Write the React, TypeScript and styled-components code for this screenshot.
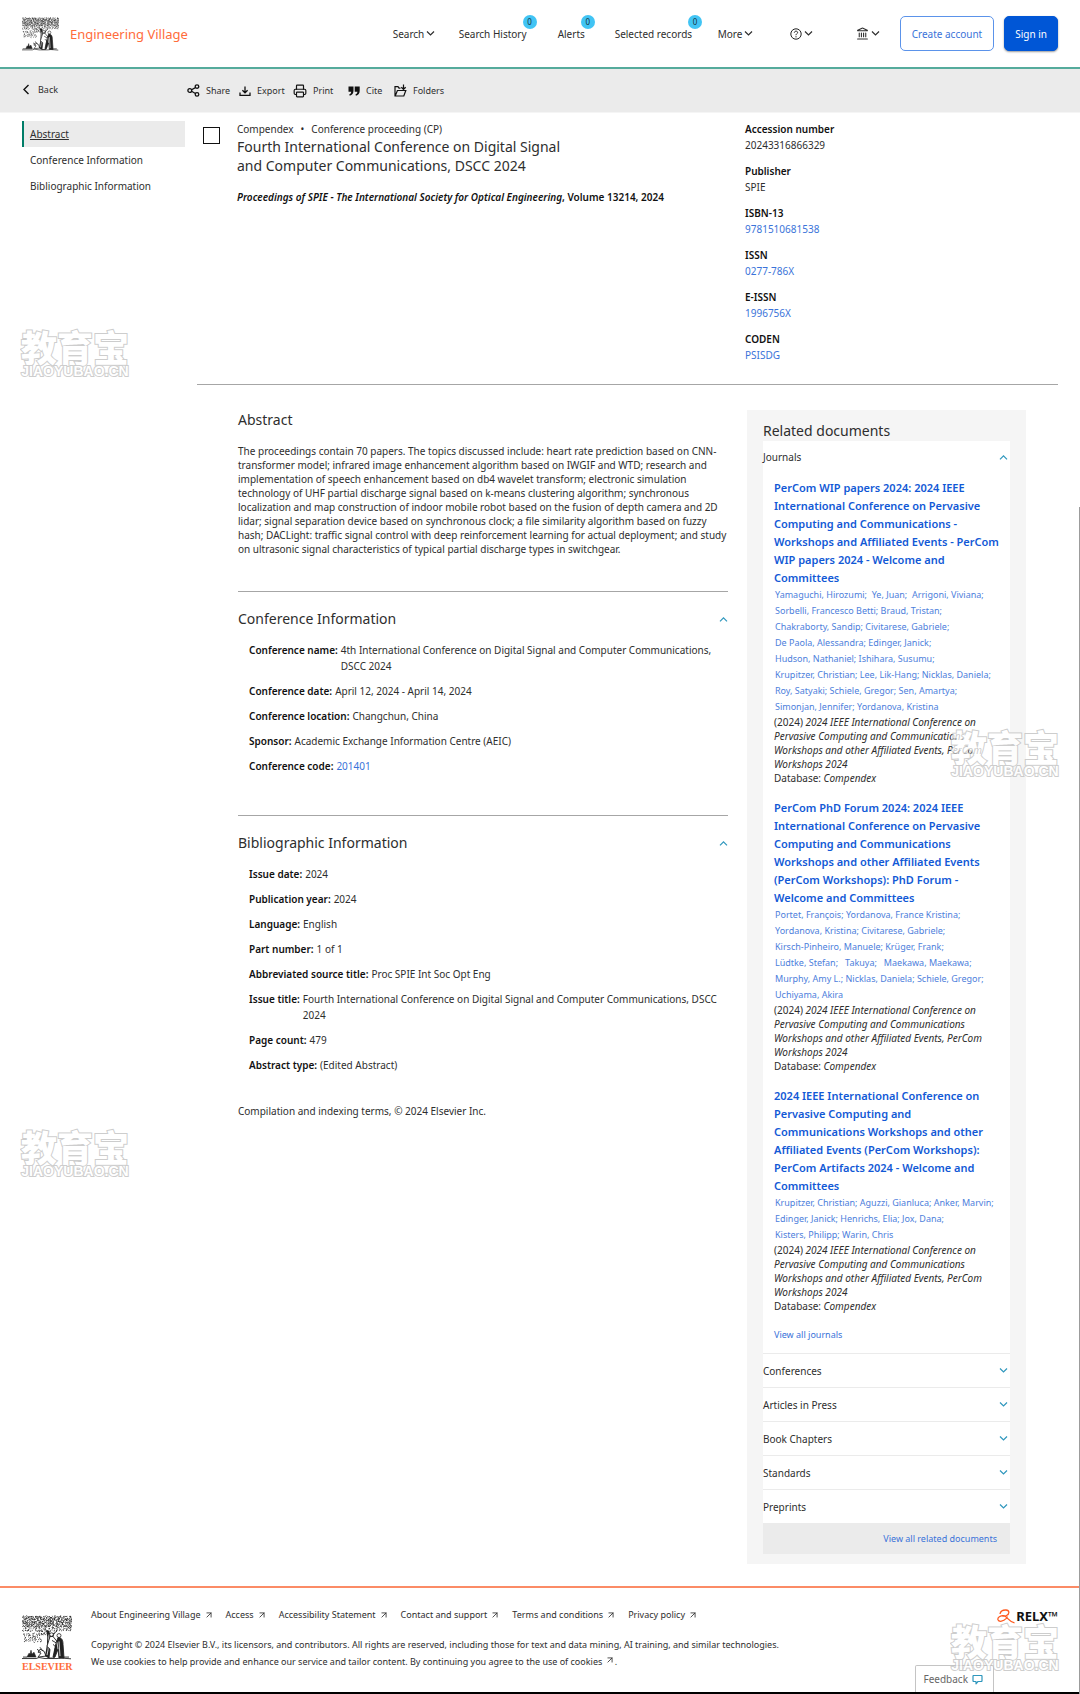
import React from "react";
import styled, { createGlobalStyle, css } from "styled-components";
import { ArrowUpRight, Landmark, Printer } from "lucide-react";

const color = {
  text: "#2e2e2e",
  strong: "#111111",
  link: "#3a73d9",
  blue: "#0056d6",
  titleLink: "#1259d6",
  orange: "#ff6c3b",
  green: "#007d68",
  teal: "#2f97bd",
  grey: "#ebebeb",
  pale: "#f5f5f5",
  rule: "#a6a6a6",
};

const GlobalStyle = createGlobalStyle`
  * { box-sizing: border-box; }
  body {
    margin: 0;
    background: #fff;
    color: ${color.text};
    font: 11px/16px "Noto Sans", "Noto Sans CJK SC", sans-serif;
  }
  h1, h2, h3, p, ul, dl, dd { margin: 0; padding: 0; font-weight: 400; }
  ul { list-style: none; }
  a { color: inherit; text-decoration: none; }
  button { font: inherit; color: inherit; background: none; border: 0; padding: 0; cursor: pointer; }
`;

const Page = styled.div`
  position: relative;
  overflow: hidden;
`;

/* ---------- header ---------- */

const Header = styled.header`
  display: flex;
  align-items: center;
  justify-content: space-between;
  height: 69px;
  padding: 0 22px;
  border-bottom: 2px solid #55ab9c;
`;

const Brand = styled.a`
  display: flex;
  align-items: center;
  gap: 11px;
  color: ${color.orange};
  font-size: 13px;
`;

const Nav = styled.nav`
  display: grid;
  grid-template-columns: 66px 99px 57px 103px 72px 66px 44px auto auto;
  align-items: center;
`;

const NavButton = styled.button`
  position: relative;
  display: inline-flex;
  align-items: center;
  justify-self: start;
  gap: 2px;
  white-space: nowrap;
  font-size: 10px;
`;

const Badge = styled.span`
  position: absolute;
  right: -10px;
  top: -11px;
  width: 14px;
  height: 14px;
  border-radius: 50%;
  background: #41c4f4;
  color: #1c3440;
  font-size: 8px;
  line-height: 14px;
  text-align: center;
`;

const AccountButton = styled.button<{ $primary?: boolean }>`
  height: 35px;
  padding: 0 11px;
  border: 1px solid #5b93ea;
  border-radius: 5px;
  color: ${color.link};
  font-size: 10px;
  white-space: nowrap;
  ${(p) =>
    p.$primary &&
    css`
      margin-left: 10px;
      padding: 0 10px;
      border-color: ${color.blue};
      background: ${color.blue};
      color: #fff;
      box-shadow: 0 1px 2px rgba(0, 0, 0, 0.4);
    `}
`;

/* ---------- toolbar ---------- */

const Toolbar = styled.div`
  display: flex;
  align-items: center;
  height: 44px;
  padding: 0 22px;
  background: ${color.grey};
  border-bottom: 1px solid ${color.pale};
`;

const BackSlot = styled.div`
  flex: 0 0 165px;
`;

const ToolList = styled.div`
  display: grid;
  grid-template-columns: 52px 54px 55px 46px auto;
`;

const Tool = styled.button<{ $gap?: number }>`
  display: inline-flex;
  align-items: center;
  gap: ${(p) => p.$gap ?? 6}px;
  font-size: 9px;
`;

/* ---------- body ---------- */

const Body = styled.div`
  display: flex;
  align-items: flex-start;
  gap: 12px;
  padding: 8px 22px 0;
`;

const Sidebar = styled.nav`
  flex: 0 0 163px;
`;

const SideLink = styled.a<{ $active?: boolean }>`
  display: block;
  padding-left: 6px;
  border-left: 2px solid transparent;
  font-size: 10px;
  line-height: 26px;
  ${(p) =>
    p.$active &&
    css`
      background: ${color.grey};
      border-color: ${color.green};
      text-decoration: underline;
    `}
`;

const Main = styled.main`
  flex: 1;
  min-width: 0;
`;

const RecordHead = styled.section`
  display: grid;
  grid-template-columns: 16px minmax(0, 1fr) 313px;
  column-gap: 18px;
  padding: 0 0 21px 6px;
  border-bottom: 1px solid ${color.rule};
`;

const Check = styled.input`
  appearance: none;
  width: 17px;
  height: 17px;
  margin: 6px 0 0;
  border: 1px solid #111;
  background: #fff;
`;

const Kind = styled.p`
  display: flex;
  gap: 7px;
  font-size: 10px;
`;

const Title = styled.h1`
  font-size: 14px;
  line-height: 19px;
`;

const Source = styled.p`
  margin-top: 14px;
  font-size: 10px;
  font-weight: 600;
  color: ${color.strong};
`;

const Meta = styled.dl`
  display: grid;
  gap: 10px;
  font-size: 10px;
`;

const MetaLabel = styled.dt`
  font-weight: 600;
  color: ${color.strong};
`;

const Link = styled.a`
  color: ${color.link};
`;

const Columns = styled.div`
  display: flex;
  align-items: flex-start;
  gap: 19px;
  padding: 25px 32px 0 41px;
`;

const Article = styled.div`
  flex: 1;
  min-width: 0;
`;

const Section = styled.section<{ $space: number }>`
  padding-bottom: ${(p) => p.$space}px;
  border-bottom: 1px solid ${color.rule};
`;

const SectionHead = styled.div<{ $first?: boolean }>`
  display: flex;
  align-items: center;
  justify-content: space-between;
  padding: ${(p) => (p.$first ? "0 0 14px" : "17px 0 13px")};
  color: ${color.teal};
`;

const SectionTitle = styled.h2`
  color: ${color.text};
  font-size: 14px;
  line-height: 20px;
`;

const Paragraph = styled.p`
  font-size: 10px;
  line-height: 14px;
`;

const Details = styled.dl`
  display: grid;
  gap: 9px;
  padding-left: 11px;
  font-size: 10px;
`;

const Detail = styled.div`
  display: flex;
  gap: 3px;
`;

const DetailLabel = styled.dt`
  flex: none;
  font-weight: 600;
  color: ${color.strong};
`;

const Terms = styled.p`
  margin-top: 30px;
  font-size: 10px;
`;

/* ---------- related documents ---------- */

const Related = styled.aside`
  flex: 0 0 279px;
  padding: 11px 16px 10px;
  background: ${color.pale};
`;

const Card = styled.div`
  background: #fff;
`;

const AccordionButton = styled.button<{ $closed?: boolean }>`
  display: flex;
  align-items: center;
  justify-content: space-between;
  width: 100%;
  height: ${(p) => (p.$closed ? 34 : 32)}px;
  padding-right: 2px;
  border-top: ${(p) => (p.$closed ? `1px solid ${color.grey}` : "0")};
  font-size: 10px;
  color: ${color.text};
  svg { color: ${color.teal}; }
`;

const Documents = styled.div`
  display: grid;
  gap: 14px;
  padding: 6px 0 10px 11px;
  white-space: nowrap;
`;

const DocTitle = styled.h3`
  color: ${color.titleLink};
  font-size: 11px;
  font-weight: 600;
  line-height: 18px;
`;

const Authors = styled.p`
  padding-left: 1px;
  color: #4d80dc;
  font-size: 9px;
  line-height: 16px;
  white-space: pre;
`;

const AllJournals = styled(Link)`
  font-size: 9px;
`;

const RelatedFoot = styled.div`
  display: flex;
  align-items: center;
  justify-content: flex-end;
  height: 31px;
  padding-right: 13px;
  background: ${color.grey};
  font-size: 9px;
`;

/* ---------- footer ---------- */

const Footer = styled.footer`
  position: relative;
  display: flex;
  height: 106px;
  margin-top: 22px;
  padding: 0 22px;
  border-top: 2px solid #fb8b66;
`;

const ElsevierMark = styled.div`
  display: flex;
  flex-direction: column;
  padding-top: 27px;
  width: 69px;
  color: ${color.orange};
  font: 700 10px/14px "Liberation Serif", serif;
`;

const FooterText = styled.div`
  flex: 1;
  padding-top: 19px;
  font-size: 9px;
`;

const FooterLinks = styled.ul`
  display: flex;
  gap: 12px;
  margin-bottom: 13px;
`;

const FooterLink = styled.a`
  display: flex;
  align-items: center;
  gap: 3px;
  white-space: nowrap;
`;

const Legal = styled.p`
  line-height: 17px;
`;

const Relx = styled.div`
  display: flex;
  align-items: center;
  gap: 1px;
  height: 16px;
  margin-top: 20px;
  color: #111;
  font: 700 13px/16px "Noto Sans", sans-serif;
`;

const Feedback = styled.button`
  position: absolute;
  right: 86px;
  bottom: 0;
  display: flex;
  align-items: center;
  gap: 4px;
  height: 27px;
  padding: 0 10px 0 7px;
  border: 1px solid #c4c4c4;
  border-bottom: 0;
  border-radius: 2px 2px 0 0;
  background: #fff;
  color: #666;
  font-size: 10px;
`;

const BottomBar = styled.div`
  height: 2px;
  background: #000;
`;

const EdgeLine = styled.div`
  position: absolute;
  right: 0;
  top: 507px;
  bottom: 0;
  width: 1px;
  background: #9c9c9c;
`;

const Stamp = styled.div<{ $right?: boolean; $top: number }>`
  position: absolute;
  top: ${(p) => p.$top}px;
  ${(p) => (p.$right ? "right: 21px;" : "left: 21px;")}
  width: 108px;
  color: #fff;
  opacity: 0.75;
  text-align: center;
  white-space: nowrap;
  pointer-events: none;
  paint-order: stroke fill;
  -webkit-text-stroke: 2px #bdbdbd;
  font: 900 36px/35px "Noto Sans CJK SC", sans-serif;
`;

const StampSite = styled.div`
  font: 700 14px/14px "Liberation Sans", sans-serif;
`;

/* ---------- drawings ---------- */

const ChevronIcon = ({ up = false }: { up?: boolean }) => (
  <svg width="9" height="9" viewBox="0 0 9 9" fill="none" stroke="currentColor" strokeWidth="1.2" aria-hidden="true">
    <path d={up ? "M1 6.300L4.500 2.800 8 6.300" : "M1 2.500L4.500 6 8 2.500"} />
  </svg>
);

const BackIcon = () => (
  <svg width="9" height="11" viewBox="0 0 9 11" fill="none" stroke="#111" strokeWidth="1.4" aria-hidden="true">
    <path d="M6.500 1L2 5.500 6.500 10" />
  </svg>
);

function buildFoliage() {
  let seed = 11;
  const rnd = () => {
    seed = (seed * 16807) % 2147483647;
    return seed / 2147483647;
  };
  let d = "";
  const fill = (x0: number, x1: number, y0: number, y1: number) => {
    for (let y = y0; y < y1; y += 1.8) {
      for (let x = x0; x < x1; x += 1.9) {
        const px = x + rnd() * 1.2;
        const py = y + rnd() * 1.1;
        d += `M${px.toFixed(1)} ${py.toFixed(1)}q${(rnd() * 2 - 1).toFixed(1)} ${(rnd() * 2 - 1).toFixed(1)} ${(rnd() * 3 - 1.5).toFixed(1)} ${(rnd() * 2.4 - 1.2).toFixed(1)}`;
      }
    }
  };
  fill(1, 49, 1, 17);
  fill(1, 49, 2, 12);
  fill(2, 19, 19, 28);
  fill(17, 28, 16, 20);
  return d;
}
const foliage = buildFoliage();

const TreeLogo = ({ width, height }: { width: number; height: number }) => (
  <svg width={width} height={height} viewBox="0 0 50 46" preserveAspectRatio="none" aria-hidden="true">
    <path d={foliage} stroke="#222" strokeWidth=".95" fill="none" />
    <path d="M24 16c2 5 1 9 1 14l-2 12 3 2h6l-3-4 1-12 2-8 3-4-4 3-2 3-2-6z" fill="#222" />
    <path d="M27 20c-1 7 0 14-2 21" stroke="#fff" strokeWidth=".8" fill="none" />
    <circle cx="29.5" cy="20" r="1.8" fill="#fff" stroke="#222" strokeWidth=".8" />
    <circle cx="37" cy="21" r="2" fill="#fff" stroke="#222" strokeWidth=".8" />
    <path d="M28 22l-3 10 3 3-1 9h5l1-9 2-8-4-5z" fill="#fff" stroke="#222" strokeWidth=".9" />
    <path d="M36 23c4 0 5 3 5 7l1 14h-5l-1-9-3 8h-2l3-14zM30 26l5 3M31 30l4 4" fill="#222" stroke="#222" strokeWidth=".9" />
    <path d="M37 27l1 15M35 28l1 7" stroke="#fff" strokeWidth=".8" />
    <path d="M16 43l3-4-3-1 2-3 4 2 2 5zM15 35l4 3M18 33l3 4" stroke="#222" strokeWidth=".9" fill="none" />
    <path d="M5 43l2-4 1 1 1-4 1 4 2-2 2 5z" fill="#222" stroke="#222" strokeWidth=".6" />
    <path d="M0 44.5h14l3-1 6 1h12l4-.5 10 .8M42 43h5M1 43h4" stroke="#222" strokeWidth=".9" fill="none" />
  </svg>
);

const ShareIcon = () => (
  <svg width="13" height="13" viewBox="0 0 13 13" fill="none" stroke="#111" strokeWidth="1.3">
    <circle cx="2.8" cy="6.5" r="1.9" />
    <circle cx="10" cy="2.6" r="1.8" />
    <circle cx="10" cy="10.4" r="1.8" />
    <path d="M4.6 5.7l3.8-2.1M4.6 7.3l3.8 2.2" />
  </svg>
);

const ExportIcon = () => (
  <svg width="12" height="12" viewBox="0 0 12 12" fill="none" stroke="#111" strokeWidth="1.3">
    <path d="M1 7.5v2.8h10V7.5M6 1.5v6M3.4 5.2L6 7.8l2.6-2.6" />
  </svg>
);

const CiteIcon = () => (
  <svg width="12" height="12" viewBox="0 0 12 12" fill="#111">
    <path d="M.5 1.5h5v4.2c0 2.7-1.300 4.300-3.700 5l-.6-1.100c1.300-.6 1.900-1.400 2-2.800H.5zM6.700 1.500h5v4.200c0 2.700-1.300 4.300-3.700 5l-.6-1.100c1.300-.6 1.900-1.400 2-2.800H6.700z" />
  </svg>
);

const FolderIcon = () => (
  <svg width="13" height="13" viewBox="0 0 13 13" fill="none" stroke="#111" strokeWidth="1.2">
    <path d="M1 12V2.600h3l1 1.500h1.500M1.200 12h8.600l2-5.500H3.400zM9.500.5v4.800M7.300 3.200l2.200 2.100 2.200-2.100" />
  </svg>
);

const HelpIcon = () => (
  <svg width="12" height="12" viewBox="0 0 12 12" fill="none" stroke="#222" strokeWidth="1">
    <circle cx="6" cy="6" r="5.200" />
    <path d="M4.300 4.700C4.400 2.600 7.700 2.700 7.600 4.600 7.500 5.800 6 5.800 6 7.200M6 8.200v1.200" />
  </svg>
);

const RelxIcon = () => (
  <svg width="18" height="15" viewBox="0 0 18 15" fill="none" stroke="#ff5a1f" strokeWidth="1.300">
    <path d="M3 5C3.500 2 6.500.900 9 1c3.600.200 3.800 4 .500 5.500-1.500.700-3.500.700-4.500.200M8 6.800C3 6.300.300 8.600 1 10.800c1 2.600 5.500 1.600 8-1.200l1.600-2M7.500 6.800c3 1.500 4.500 6 10 7" />
  </svg>
);

const CommentIcon = () => (
  <svg width="11" height="11" viewBox="0 0 11 11" fill="none" stroke={color.teal} strokeWidth="1.200" strokeLinejoin="round">
    <path d="M1.500 1.500h8l.5.500v5l-.5.500H6L4 9.800V7.500H1.500L1 7V2z" />
  </svg>
);

/* ---------- data ---------- */

const sourceLines = ["2024 IEEE International Conference on", "Pervasive Computing and Communications", "Workshops and other Affiliated Events, PerCom", "Workshops 2024"];

const documents = [
  {
    title: ["PerCom WIP papers 2024: 2024 IEEE", "International Conference on Pervasive", "Computing and Communications -", "Workshops and Affiliated Events - PerCom", "WIP papers 2024 - Welcome and", "Committees"],
    authors: ["Yamaguchi, Hirozumi;  Ye, Juan;  Arrigoni, Viviana;", "Sorbelli, Francesco Betti; Braud, Tristan;", "Chakraborty, Sandip; Civitarese, Gabriele;", "De Paola, Alessandra; Edinger, Janick;", "Hudson, Nathaniel; Ishihara, Susumu;", "Krupitzer, Christian; Lee, Lik-Hang; Nicklas, Daniela;", "Roy, Satyaki; Schiele, Gregor; Sen, Amartya;", "Simonjan, Jennifer; Yordanova, Kristina"],
  },
  {
    title: ["PerCom PhD Forum 2024: 2024 IEEE", "International Conference on Pervasive", "Computing and Communications", "Workshops and other Affiliated Events", "(PerCom Workshops): PhD Forum -", "Welcome and Committees"],
    authors: ["Portet, François; Yordanova, France Kristina;", "Yordanova, Kristina; Civitarese, Gabriele;", "Kirsch-Pinheiro, Manuele; Krüger, Frank;", "Lüdtke, Stefan;   Takuya;   Maekawa, Maekawa;", "Murphy, Amy L.; Nicklas, Daniela; Schiele, Gregor;", "Uchiyama, Akira"],
  },
  {
    title: ["2024 IEEE International Conference on", "Pervasive Computing and", "Communications Workshops and other", "Affiliated Events (PerCom Workshops):", "PerCom Artifacts 2024 - Welcome and", "Committees"],
    authors: ["Krupitzer, Christian; Aguzzi, Gianluca; Anker, Marvin;", "Edinger, Janick; Henrichs, Elia; Jox, Dana;", "Kisters, Philipp; Warin, Chris"],
  },
];

const meta: [string, string, boolean][] = [
  ["Accession number", "20243316866329", false],
  ["Publisher", "SPIE", false],
  ["ISBN-13", "9781510681538", true],
  ["ISSN", "0277-786X", true],
  ["E-ISSN", "1996756X", true],
  ["CODEN", "PSISDG", true],
];

const conference: [string, React.ReactNode][] = [
  ["Conference name:", <>4th International Conference on Digital Signal and Computer Communications,<br />DSCC 2024</>],
  ["Conference date:", "April 12, 2024 - April 14, 2024"],
  ["Conference location:", "Changchun, China"],
  ["Sponsor:", "Academic Exchange Information Centre (AEIC)"],
  ["Conference code:", <Link href="#code">201401</Link>],
];

const bibliographic: [string, React.ReactNode][] = [
  ["Issue date:", "2024"],
  ["Publication year:", "2024"],
  ["Language:", "English"],
  ["Part number:", "1 of 1"],
  ["Abbreviated source title:", "Proc SPIE Int Soc Opt Eng"],
  ["Issue title:", <>Fourth International Conference on Digital Signal and Computer Communications, DSCC<br />2024</>],
  ["Page count:", "479"],
  ["Abstract type:", "(Edited Abstract)"],
];

const abstractLines = [
  "The proceedings contain 70 papers. The topics discussed include: heart rate prediction based on CNN-",
  "transformer model; infrared image enhancement algorithm based on IWGIF and WTD; research and",
  "implementation of speech enhancement based on db4 wavelet transform; electronic simulation",
  "technology of UHF partial discharge signal based on k-means clustering algorithm; synchronous",
  "localization and map construction of indoor mobile robot based on the fusion of depth camera and 2D",
  "lidar; signal separation device based on synchronous clock; a file similarity algorithm based on fuzzy",
  "hash; DACLight: traffic signal control with deep reinforcement learning for actual deployment; and study",
  "on ultrasonic signal characteristics of typical partial discharge types in switchgear.",
];

const footerLinks = ["About Engineering Village", "Access", "Accessibility Statement", "Contact and support", "Terms and conditions", "Privacy policy"];

const Lines = ({ items }: { items: string[] }) => (
  <>
    {items.map((line, i) => (
      <React.Fragment key={line}>
        {i > 0 && <br />}
        {line}
      </React.Fragment>
    ))}
  </>
);

const DetailList = ({ rows }: { rows: [string, React.ReactNode][] }) => (
  <Details>
    {rows.map(([label, value]) => (
      <Detail key={label}>
        <DetailLabel>{label}</DetailLabel>
        <dd>{value}</dd>
      </Detail>
    ))}
  </Details>
);

export default function App() {
  return (
    <Page>
      <GlobalStyle />
      <Header>
        <Brand href="#home">
          <TreeLogo width={37} height={34} />
          Engineering Village
        </Brand>
        <Nav>
          <NavButton>Search<ChevronIcon /></NavButton>
          <NavButton>Search History<Badge>0</Badge></NavButton>
          <NavButton>Alerts<Badge>0</Badge></NavButton>
          <NavButton>Selected records<Badge>0</Badge></NavButton>
          <NavButton>More<ChevronIcon /></NavButton>
          <NavButton aria-label="Help"><HelpIcon /><ChevronIcon /></NavButton>
          <NavButton aria-label="Institution"><Landmark size={13} /><ChevronIcon /></NavButton>
          <AccountButton>Create account</AccountButton>
          <AccountButton $primary>Sign in</AccountButton>
        </Nav>
      </Header>

      <Toolbar>
        <BackSlot>
          <Tool $gap={7}><BackIcon />Back</Tool>
        </BackSlot>
        <ToolList>
          <Tool><ShareIcon />Share</Tool>
          <Tool><ExportIcon />Export</Tool>
          <Tool><Printer size={14} color="#111" />Print</Tool>
          <Tool><CiteIcon />Cite</Tool>
          <Tool><FolderIcon />Folders</Tool>
        </ToolList>
      </Toolbar>

      <Body>
        <Sidebar>
          <SideLink href="#abstract" $active>Abstract</SideLink>
          <SideLink href="#conference">Conference Information</SideLink>
          <SideLink href="#bibliographic">Bibliographic Information</SideLink>
        </Sidebar>
        <Main>
          <RecordHead>
            <Check type="checkbox" aria-label="Select record" />
            <div>
              <Kind><span>Compendex</span><span>•</span><span>Conference proceeding (CP)</span></Kind>
              <Title>Fourth International Conference on Digital Signal<br />and Computer Communications, DSCC 2024</Title>
              <Source><em>Proceedings of SPIE - The International Society for Optical Engineering</em>, Volume 13214, 2024</Source>
            </div>
            <Meta>
              {meta.map(([label, value, linked]) => (
                <div key={label}>
                  <MetaLabel>{label}</MetaLabel>
                  <dd>{linked ? <Link href="#lookup">{value}</Link> : value}</dd>
                </div>
              ))}
            </Meta>
          </RecordHead>

          <Columns>
            <Article>
              <Section id="abstract" $space={35}>
                <SectionHead $first><SectionTitle>Abstract</SectionTitle></SectionHead>
                <Paragraph><Lines items={abstractLines} /></Paragraph>
              </Section>
              <Section id="conference" $space={41}>
                <SectionHead><SectionTitle>Conference Information</SectionTitle><ChevronIcon up /></SectionHead>
                <DetailList rows={conference} />
              </Section>
              <section id="bibliographic">
                <SectionHead><SectionTitle>Bibliographic Information</SectionTitle><ChevronIcon up /></SectionHead>
                <DetailList rows={bibliographic} />
              </section>
              <Terms>Compilation and indexing terms, © 2024 Elsevier Inc.</Terms>
            </Article>

            <Related>
              <SectionTitle>Related documents</SectionTitle>
              <Card>
                <AccordionButton>Journals<ChevronIcon up /></AccordionButton>
                <Documents>
                  {documents.map((doc) => (
                    <article key={doc.title.join(" ")}>
                      <DocTitle><a href="#document"><Lines items={doc.title} /></a></DocTitle>
                      <Authors><Lines items={doc.authors} /></Authors>
                      <Paragraph>(2024) <em><Lines items={sourceLines} /></em><br />Database: <em>Compendex</em></Paragraph>
                    </article>
                  ))}
                  <AllJournals href="#journals">View all journals</AllJournals>
                </Documents>
                {["Conferences", "Articles in Press", "Book Chapters", "Standards", "Preprints"].map((name) => (
                  <AccordionButton $closed key={name}>{name}<ChevronIcon /></AccordionButton>
                ))}
                <RelatedFoot><Link href="#related">View all related documents</Link></RelatedFoot>
              </Card>
            </Related>
          </Columns>
        </Main>
      </Body>

      <Footer>
        <ElsevierMark>
          <TreeLogo width={50} height={45} />
          ELSEVIER
        </ElsevierMark>
        <FooterText>
          <FooterLinks>
            {footerLinks.map((name) => (
              <li key={name}><FooterLink href="#info">{name}<ArrowUpRight size={10} /></FooterLink></li>
            ))}
          </FooterLinks>
          <Legal>Copyright © 2024 Elsevier B.V., its licensors, and contributors. All rights are reserved, including those for text and data mining, AI training, and similar technologies.</Legal>
          <Legal>We use cookies to help provide and enhance our service and tailor content. By continuing you agree to the <a href="#cookies">use of cookies <ArrowUpRight size={10} /></a>.</Legal>
        </FooterText>
        <Relx><RelxIcon />RELX™</Relx>
        <Feedback>Feedback<CommentIcon /></Feedback>
      </Footer>
      <BottomBar />

      <EdgeLine />
      <Stamp $top={329}>教育宝<StampSite>JIAOYUBAO.CN</StampSite></Stamp>
      <Stamp $top={729} $right>教育宝<StampSite>JIAOYUBAO.CN</StampSite></Stamp>
      <Stamp $top={1129}>教育宝<StampSite>JIAOYUBAO.CN</StampSite></Stamp>
      <Stamp $top={1623} $right>教育宝<StampSite>JIAOYUBAO.CN</StampSite></Stamp>
    </Page>
  );
}
